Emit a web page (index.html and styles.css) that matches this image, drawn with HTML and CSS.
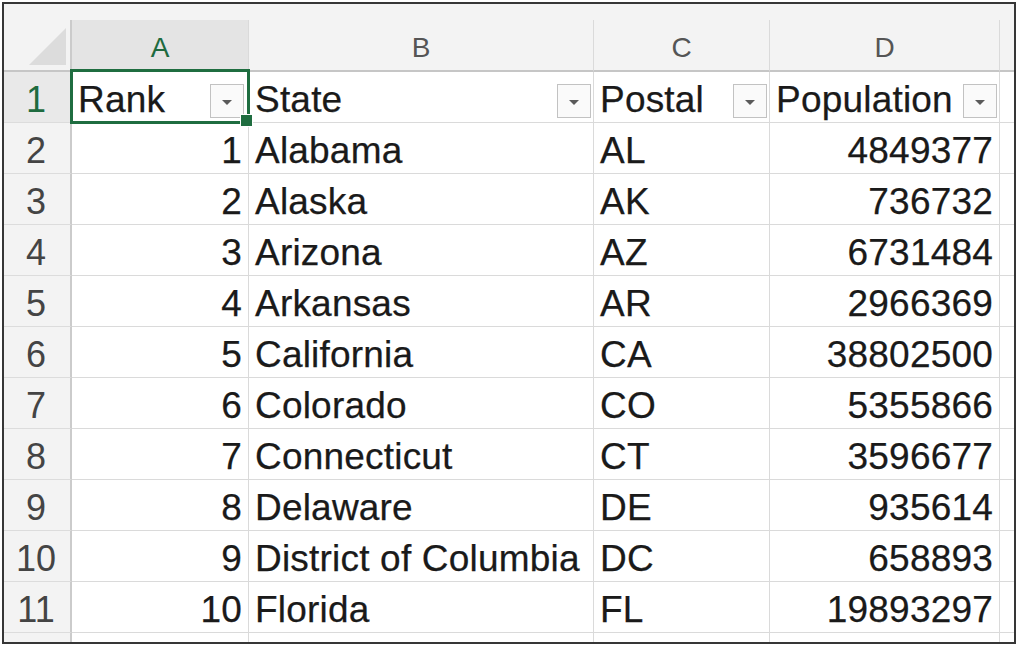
FILE: index.html
```html
<!DOCTYPE html>
<html lang="en">
<head>
<meta charset="utf-8">
<title>Sheet</title>
<link rel="stylesheet" href="styles.css">
</head>
<body>
<div class="sheet">
  <div class="strip"></div>
  <div class="grid">
    <div class="corner"><svg class="tri" width="68" height="52" viewBox="0 0 68 52"><polygon points="62,8 62,45 25,45" fill="#dcdcdc"/></svg></div>
    <div class="colhead sel">A</div>
    <div class="colhead">B</div>
    <div class="colhead">C</div>
    <div class="colhead">D</div>
    <div class="colhead edge"></div>

    <div class="rowhead sel">1</div>
    <div class="cell head active"><span>Rank</span><span class="dd"></span></div>
    <div class="cell head"><span>State</span><span class="dd"></span></div>
    <div class="cell head"><span>Postal</span><span class="dd"></span></div>
    <div class="cell head"><span>Population</span><span class="dd"></span></div>
    <div class="cell edge"></div>

    <div class="rowhead">2</div><div class="cell num">1</div><div class="cell">Alabama</div><div class="cell">AL</div><div class="cell num">4849377</div><div class="cell edge"></div>
    <div class="rowhead">3</div><div class="cell num">2</div><div class="cell">Alaska</div><div class="cell">AK</div><div class="cell num">736732</div><div class="cell edge"></div>
    <div class="rowhead">4</div><div class="cell num">3</div><div class="cell">Arizona</div><div class="cell">AZ</div><div class="cell num">6731484</div><div class="cell edge"></div>
    <div class="rowhead">5</div><div class="cell num">4</div><div class="cell">Arkansas</div><div class="cell">AR</div><div class="cell num">2966369</div><div class="cell edge"></div>
    <div class="rowhead">6</div><div class="cell num">5</div><div class="cell">California</div><div class="cell">CA</div><div class="cell num">38802500</div><div class="cell edge"></div>
    <div class="rowhead">7</div><div class="cell num">6</div><div class="cell">Colorado</div><div class="cell">CO</div><div class="cell num">5355866</div><div class="cell edge"></div>
    <div class="rowhead">8</div><div class="cell num">7</div><div class="cell">Connecticut</div><div class="cell">CT</div><div class="cell num">3596677</div><div class="cell edge"></div>
    <div class="rowhead">9</div><div class="cell num">8</div><div class="cell">Delaware</div><div class="cell">DE</div><div class="cell num">935614</div><div class="cell edge"></div>
    <div class="rowhead">10</div><div class="cell num">9</div><div class="cell">District of Columbia</div><div class="cell">DC</div><div class="cell num">658893</div><div class="cell edge"></div>
    <div class="rowhead">11</div><div class="cell num">10</div><div class="cell">Florida</div><div class="cell">FL</div><div class="cell num">19893297</div><div class="cell edge"></div>

    <div class="rowhead last"></div><div class="cell last"></div><div class="cell last"></div><div class="cell last"></div><div class="cell last"></div><div class="cell edge last"></div>
  </div>
</div>
</body>
</html>
```

FILE: styles.css
```css
* { box-sizing: border-box; }
html, body { margin: 0; padding: 0; background: #ffffff; }
body { font-family: "Liberation Sans", Arial, sans-serif; }

.sheet {
  margin: 2px;
  width: 1014px;
  height: 642px;
  border: 2px solid #363636;
  background: #ffffff;
  overflow: hidden;
  display: flex;
  flex-direction: column;
}

.strip {
  height: 16px;
  flex: none;
  background: #f3f3f3;
}

.grid {
  flex: 1;
  display: grid;
  grid-template-columns: 68px 177px 345px 176px 230px 1fr;
  grid-template-rows: 52px repeat(11, 51px) 1fr;
}

.corner {
  background: #f3f3f3;
  border-right: 2px solid #cbcbcb;
  border-bottom: 2px solid #c6c6c6;
}
.tri { display: block; }

.colhead {
  background: #f3f3f3;
  border-right: 1px solid #dadada;
  border-bottom: 2px solid #c6c6c6;
  color: #555555;
  font-size: 28px;
  display: flex;
  align-items: center;
  justify-content: center;
  padding-top: 6px;
}
.colhead.sel {
  background: #e4e4e4;
  color: #1e6b3f;
}
.colhead.edge { border-right: none; }

.rowhead {
  background: #f3f3f3;
  border-right: 2px solid #cbcbcb;
  border-bottom: 1px solid #dcdcdc;
  color: #444444;
  font-size: 36px;
  display: flex;
  align-items: center;
  justify-content: center;
  padding-top: 5px;
  padding-right: 2px;
}
.rowhead.sel {
  background: #e9e9e9;
  color: #1e6b3f;
}

.cell {
  border-right: 1px solid #dadada;
  border-bottom: 1px solid #dadada;
  color: #1a1a1a;
  font-size: 37px;
  letter-spacing: 0.2px;
  -webkit-text-stroke: 0.25px #1a1a1a;
  white-space: nowrap;
  overflow: hidden;
  display: flex;
  align-items: center;
  padding: 5px 6px 0 6px;
}
.cell.num { justify-content: flex-end; padding-right: 6px; }
.cell.edge { border-right: none; }
.last { border-bottom: none; }

.cell.head {
  justify-content: space-between;
  padding-right: 2px;
  overflow: visible;
}

.dd {
  width: 34px;
  height: 34px;
  flex: none;
  align-self: flex-end;
  margin-bottom: 4px;
  border: 1px solid #c2c2c2;
  background: #fafafa;
  display: flex;
  align-items: center;
  justify-content: center;
  -webkit-text-stroke: 0;
}
.dd::before {
  content: "";
  width: 0;
  height: 0;
  border-left: 5px solid transparent;
  border-right: 5px solid transparent;
  border-top: 5px solid #5a5a5a;
  margin-top: 2px;
}

.cell.active { position: relative; }
.cell.active .dd { margin-right: 2px; }
.cell.active::after {
  content: "";
  position: absolute;
  left: -2px;
  top: -3px;
  right: -2px;
  bottom: -2px;
  border: 3px solid #1f6d40;
  z-index: 2;
}
.cell.active::before {
  content: "";
  position: absolute;
  right: -5px;
  bottom: -5px;
  width: 11px;
  height: 11px;
  background: #1f6d40;
  border: 1px solid #ffffff;
  z-index: 3;
}
```
